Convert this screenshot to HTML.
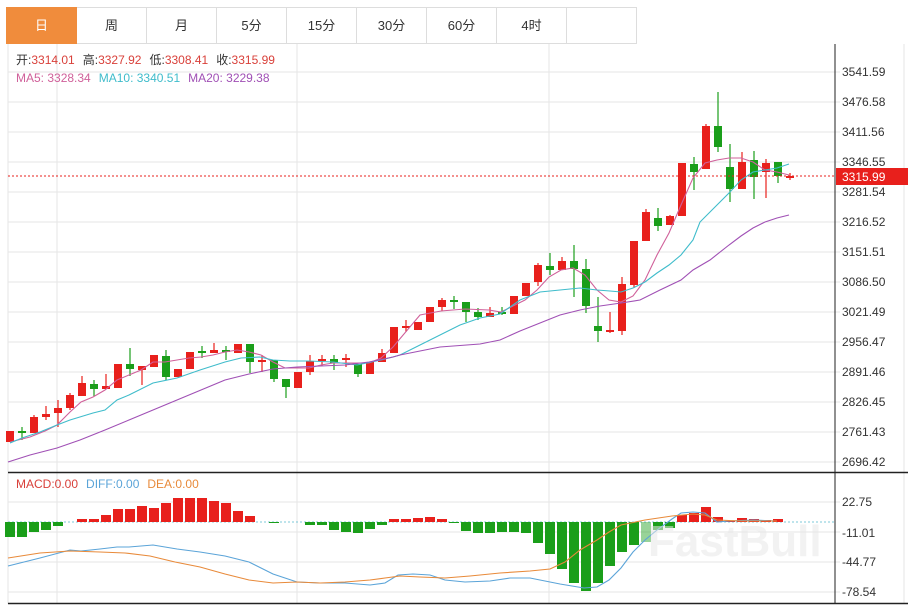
<!DOCTYPE html><html><head><meta charset="utf-8"><style>
body{margin:0;background:#fff;width:908px;height:606px;overflow:hidden;font-family:"Liberation Sans","Noto Sans CJK SC",sans-serif}
.tabs{position:absolute;left:6px;top:7px;height:36px;display:flex}
.tab{width:69px;height:35px;border:1px solid #ddd;border-left:none;line-height:35px;text-align:center;font-size:13px;color:#333}
.tab:first-child{border-left:1px solid #ddd;background:#f08c3c;color:#fff;border-color:#f08c3c}
svg{position:absolute;left:0;top:0}
</style></head><body>
<div class="tabs"><div class="tab">日</div><div class="tab">周</div><div class="tab">月</div><div class="tab">5分</div><div class="tab">15分</div><div class="tab">30分</div><div class="tab">60分</div><div class="tab">4时</div><div class="tab"></div></div>
<svg id="s" width="908" height="606" xmlns="http://www.w3.org/2000/svg" font-family="Liberation Sans, Noto Sans CJK SC, sans-serif">
<g stroke="#e6e6e6" stroke-width="1" id="grid">
<line x1="8" y1="44" x2="8" y2="604"/>
<line x1="57" y1="44" x2="57" y2="604"/><line x1="297" y1="44" x2="297" y2="604"/><line x1="549" y1="44" x2="549" y2="604"/>
<line x1="904" y1="44" x2="904" y2="604"/>
</g>
<g id="cand"></g>
<line x1="8" y1="176" x2="834" y2="176" stroke="#e8201c" stroke-dasharray="2,2"/>
<line x1="835" y1="44" x2="835" y2="604" stroke="#222"/>
<line x1="8" y1="472.5" x2="908" y2="472.5" stroke="#222" stroke-width="1.5"/>
<line x1="8" y1="603.5" x2="908" y2="603.5" stroke="#222" stroke-width="1.5"/>
<rect x="836" y="168" width="72" height="17" fill="#e8201c"/>
<g font-size="12" fill="#333" id="ax">
<text x="842" y="76">3541.59</text><text x="842" y="106">3476.58</text><text x="842" y="136">3411.56</text><text x="842" y="166">3346.55</text><text x="842" y="196">3281.54</text><text x="842" y="226">3216.52</text><text x="842" y="256">3151.51</text><text x="842" y="286">3086.50</text><text x="842" y="316">3021.49</text><text x="842" y="346">2956.47</text><text x="842" y="376">2891.46</text><text x="842" y="406">2826.45</text><text x="842" y="436">2761.43</text><text x="842" y="466">2696.42</text>
<text x="842" y="506">22.75</text><text x="842" y="537">-11.01</text><text x="842" y="566">-44.77</text><text x="842" y="596">-78.54</text>
</g>
<text x="842" y="181" font-size="12" fill="#fff">3315.99</text>
<text x="648" y="556" font-size="44" font-weight="bold" fill="#e8e8e8" fill-opacity="0.55">FastBull</text>
<g font-size="12">
<text x="16" y="64"><tspan fill="#333">开:</tspan><tspan fill="#d9403a">3314.01</tspan><tspan fill="#333" dx="8">高:</tspan><tspan fill="#d9403a">3327.92</tspan><tspan fill="#333" dx="8">低:</tspan><tspan fill="#d9403a">3308.41</tspan><tspan fill="#333" dx="8">收:</tspan><tspan fill="#d9403a">3315.99</tspan></text>
<text x="16" y="82"><tspan fill="#d0609a">MA5: 3328.34</tspan><tspan fill="#3fbccb" dx="8">MA10: 3340.51</tspan><tspan fill="#a050b5" dx="8">MA20: 3229.38</tspan></text>
<text x="16" y="488"><tspan fill="#d9403a">MACD:0.00</tspan><tspan fill="#5ba4d8" dx="8">DIFF:0.00</tspan><tspan fill="#e88a3a" dx="8">DEA:0.00</tspan></text>
</g>
</svg>
<script>
var N="http://www.w3.org/2000/svg",s=document.getElementById('grid'),c=document.getElementById('cand');
function el(t,a,p){var e=document.createElementNS(N,t);for(var k in a)e.setAttribute(k,a[k]);(p||c).appendChild(e);return e}
for(var y=72;y<=462;y+=30)el('line',{x1:8,y1:y,x2:840,y2:y},s);
[502,532,562,592].forEach(function(y){el('line',{x1:8,y1:y,x2:840,y2:y},s)});
el('line',{x1:8,y1:522,x2:834,y2:522,stroke:'#7cc8d8','stroke-dasharray':'2,2'},s);
var R='#e8201c',G='#1a9e1a';
var d=[[431,442,431,442,R],[431,433,427,440,G],[417,433,415,433,R],[414,417,406,420,R],[408,413,400,427,R],[395,408,393,410,R],[383,396,376,396,R],[384,389,380,396,G],[386,389,374,389,R],[364,388,364,388,R],[364,369,348,376,G],[366,370,366,385,R],[355,367,355,367,R],[356,377,350,380,G],[369,377,369,377,R],[352,369,352,369,R],[351,353,346,358,G],[350,353,343,353,R],[350,352,346,360,G],[344,353,344,353,R],[344,362,344,373,G],[360,362,355,372,R],[360,379,360,382,G],[379,387,379,398,G],[372,388,372,388,R],[361,372,355,375,R],[359,361,355,366,R],[359,363,355,370,G],[358,360,354,367,R],[364,374,364,377,G],[362,374,362,374,R],[353,362,349,362,R],[327,353,327,353,R],[326,328,320,332,R],[322,330,322,330,R],[307,322,307,322,R],[300,307,298,311,R],[300,302,296,309,G],[302,312,302,322,G],[312,317,308,320,G],[313,317,307,317,R],[312,314,307,315,G],[296,314,296,314,R],[283,296,283,296,R],[265,282,263,286,R],[266,270,253,275,G],[261,270,257,270,R],[261,269,245,297,G],[269,306,259,313,G],[326,331,297,342,G],[330,332,312,333,R],[284,331,277,335,R],[241,285,241,288,R],[212,241,209,241,R],[218,226,208,231,G],[216,225,215,225,R],[163,216,163,216,R],[164,172,157,190,G],[126,169,124,169,R],[126,147,92,152,G],[167,189,144,202,G],[162,189,152,189,R],[160,177,151,199,G],[163,172,159,198,R],[162,176,162,183,G],[176,178,173,180,R]];
d.forEach(function(q,i){var x=10+12*i;el('line',{x1:x,y1:q[2],x2:x,y2:q[3],stroke:q[4],'stroke-width':1.2});el('rect',{x:x-4,y:q[0],width:8,height:Math.max(1.5,q[1]-q[0]),fill:q[4]})});
var m=[15,15,10,8,4,0,-3,-3,-7,-13,-13,-16,-14,-19,-24,-24,-24,-21,-19,-11,-6,0,1,0,0,3,3,8,10,11,7,3,-3,-3,-4,-5,-3,1,9,11,11,10,10,11,21,32,47,61,69,61,44,30,23,20,8,6,-7,-9,-15,-5,-1,-4,-3,-2,-3,0];
m.forEach(function(v,i){if(!v)return;var x=10+12*i;el('rect',{x:x-5,y:v>0?522:522+v,width:10,height:Math.abs(v),fill:v>0?G:R,'fill-opacity':(i==53)?0.45:1})});
function pl(p,col){el('polyline',{points:p,fill:'none',stroke:col,'stroke-width':1.1})}
pl("10,442 30,437 45,431 57,425 70,412 81,402 93,397 105,390 117,380 129,375 141,370 153,362 165,362 177,360 189,358 201,357 213,355 225,352 237,350 249,352 261,355 273,362 285,368 297,368 309,368 321,365 333,363 345,363 357,363 369,363 381,358 393,347 420,315 441,311 465,309 489,310 501,312 513,306 525,300 537,290 549,277 561,270 573,268 585,275 597,290 609,300 621,302 633,296 645,280 657,255 669,233 681,205 693,178 705,163 717,160 729,158 741,158 753,162 765,170 777,172 789,175","#d0609a");
pl("10,443 22,438 40,432 57,425 70,420 93,413 105,410 117,400 129,395 153,383 177,378 200,370 225,362 241,358 260,357 273,360 290,361 309,361 333,362 357,365 381,360 393,357 400,355 420,345 440,335 460,325 480,318 500,314 520,300 540,292 560,290 580,288 597,290 610,291 621,292 633,288 645,282 657,273 669,265 681,255 693,240 700,222 717,205 729,193 741,180 753,172 765,170 777,168 789,164","#3fbccb");
pl("8,462 30,455 57,448 80,440 105,430 129,420 153,410 177,400 201,390 225,380 249,374 273,369 297,367 321,366 345,365 369,362 393,357 400,355 440,347 480,344 500,340 520,331 540,323 560,315 580,310 600,306 621,303 640,300 660,290 681,280 693,270 710,260 729,245 741,236 753,228 765,222 777,218 789,215","#a050b5");
pl("8,566 40,558 70,550 81,551 100,549 117,547 129,547 153,545 177,549 200,552 225,556 249,562 273,574 297,582 320,583 345,583 370,585 385,583 398,575 413,574 430,575 445,580 465,582 490,581 510,578 530,578 560,584 584,588 597,587 609,580 621,568 633,552 645,540 657,530 672,519 681,513 693,512 705,513 717,522 729,521 753,520 777,521","#5ba4d8");
pl("8,558 40,553 70,551 100,552 125,553 150,556 175,562 200,567 225,574 249,580 273,583 297,582 320,583 345,582 370,580 385,578 400,576 420,577 445,578 470,576 500,573 530,571 550,569 565,562 580,550 597,540 609,532 621,525 645,520 672,516 693,514 705,515 717,520 741,521 777,521","#e88a3a");
</script>
</body></html>
